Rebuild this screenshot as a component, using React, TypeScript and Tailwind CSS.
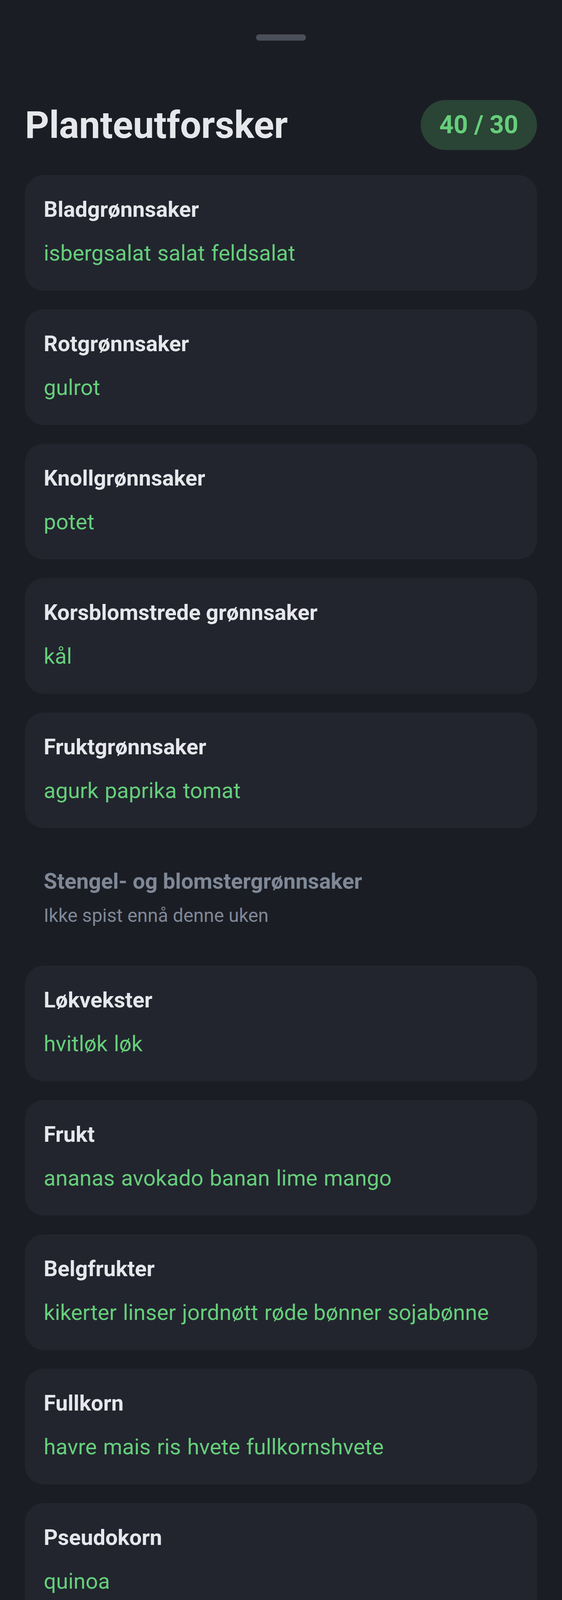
type Category = {
  name: string
  items: string[]
}

const CATEGORIES: Category[] = [
  { name: 'Bladgrønnsaker', items: ['isbergsalat', 'salat', 'feldsalat'] },
  { name: 'Rotgrønnsaker', items: ['gulrot'] },
  { name: 'Knollgrønnsaker', items: ['potet'] },
  { name: 'Korsblomstrede grønnsaker', items: ['kål'] },
  { name: 'Fruktgrønnsaker', items: ['agurk', 'paprika', 'tomat'] },
  { name: 'Stengel- og blomstergrønnsaker', items: [] },
  { name: 'Løkvekster', items: ['hvitløk', 'løk'] },
  { name: 'Frukt', items: ['ananas', 'avokado', 'banan', 'lime', 'mango'] },
  { name: 'Belgfrukter', items: ['kikerter', 'linser', 'jordnøtt', 'røde bønner', 'sojabønne'] },
  { name: 'Fullkorn', items: ['havre', 'mais', 'ris', 'hvete', 'fullkornshvete'] },
  { name: 'Pseudokorn', items: ['quinoa'] },
  { name: 'Nøtter', items: ['cashew', 'hasselnøtt', 'pekannøtt', 'valnøtt'] },
  { name: 'Frø', items: ['hampfrø', 'linfrø'] },
  { name: 'Urter og krydder', items: ['kakao', 'spisskummen', 'koriander', 'korianderfrø', 'gurkemeie'] },
  { name: 'Sopp og tang', items: ['Chlorella', 'Spirulina'] },
  { name: 'Annet / Ukjent', items: [] },
]

function CategoryCard({ category }: { category: Category }) {
  const eaten = category.items.length > 0

  // Not eaten yet: no card background, muted text
  if (!eaten) {
    return (
      <div className="p-[48px]">
        <p className="text-[56px] leading-[80px] font-bold text-[#7f8897]">{category.name}</p>
        <p className="mt-[16px] text-[48px] leading-[64px] text-[#7f8897]">Ikke spist ennå denne uken</p>
      </div>
    )
  }

  return (
    <div className="rounded-[48px] bg-[#22252e] p-[48px]">
      <p className="text-[56px] leading-[80px] font-bold text-[#e6e7eb]">{category.name}</p>
      <div className="mt-[24px] flex flex-wrap gap-[16px]">
        {category.items.map((item) => (
          <span key={item} className="py-[8px] text-[56px] leading-[80px] text-[#66ce7b]">
            {item}
          </span>
        ))}
      </div>
    </div>
  )
}

export default function App() {
  return (
    <div
      className="w-full bg-[#1b1d24] px-[64px] pt-[88px] pb-[128px]"
      style={{ fontFamily: 'Roboto, "Noto Sans", sans-serif' }}
    >
      {/* Sheet handle */}
      <div className="mx-auto h-[16px] w-[128px] rounded-full bg-[#4b4f59]" />

      {/* Header */}
      <div className="mt-[152px] flex h-[128px] items-center justify-between">
        <h1 className="text-[96px] leading-[128px] font-bold text-[#e6e7eb]">Planteutforsker</h1>
        <div className="flex h-[128px] items-center rounded-full bg-[#2a4435] px-[48px] text-[64px] font-bold text-[#66ce7b]">
          40 / 30
        </div>
      </div>

      {/* Categories */}
      <div className="mt-[64px] flex flex-col gap-[48px]">
        {CATEGORIES.map((c) => (
          <CategoryCard key={c.name} category={c} />
        ))}
      </div>
    </div>
  )
}
